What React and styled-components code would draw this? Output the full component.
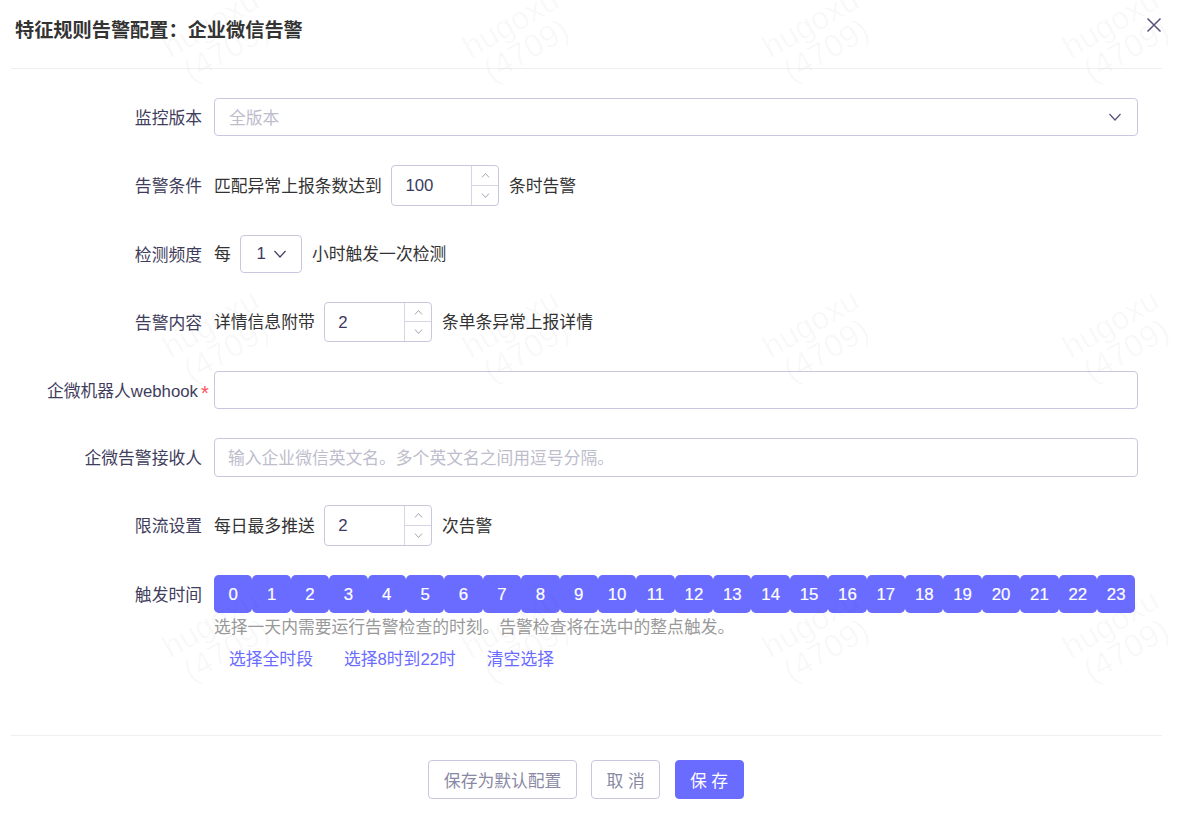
import React from 'react';
import styled, { createGlobalStyle } from 'styled-components';

const Global = createGlobalStyle`
  html, body { margin: 0; padding: 0; background: #fff; height: 100%; overflow: hidden; }
  * { box-sizing: border-box; }
  body { font-family: "Liberation Sans", "Noto Sans CJK SC", sans-serif; font-size: 16.8px; color: #333; }
`;

const Modal = styled.div`
  position: relative;
  width: 1182px;
  height: 821px;
  padding: 0 20px 0 11px;
  overflow: hidden;
`;
const Header = styled.header`
  height: 69px;
  border-bottom: 1px solid #eeeef3;
`;
const Title = styled.h2`
  margin: 0;
  padding: 18px 0 0 4px;
  font-size: 19.2px;
  line-height: 26px;
  font-weight: 700;
  color: #333;
`;
const Close = styled.button`
  position: absolute;
  top: 17px;
  left: 1146px;
  width: 16px;
  height: 16px;
  padding: 0;
  border: 0;
  background: none;
  color: #55537a;
  display: flex;
`;
const Form = styled.form`
  height: 667px;
  padding: 29px 24px 0 0;
  display: flex;
  flex-direction: column;
  gap: 28.8px;
`;
const Row = styled.div`
  display: flex;
  align-items: ${p => (p.$top ? 'flex-start' : 'center')};
  gap: 12px;
`;
const Label = styled.label`
  width: 191px;
  flex: none;
  margin: 2px 0 -2px;
  text-align: right;
  color: #3f3d5c;
  line-height: 38.4px;
  white-space: nowrap;
`;
const Star = styled.span`
  color: #ff4d5b;
  font-size: 20px;
  line-height: 0;
  vertical-align: -3px;
  margin: 0 -6.8px 0 3px;
`;
const Control = styled.div`
  flex: 1;
  min-width: 0;
  display: flex;
  align-items: center;
  gap: 9.6px;
`;
const Field = styled.div`
  flex: 1;
  height: 38.4px;
  border: 1px solid #c7c8dd;
  border-radius: 4px;
  padding: 0 15px 0 ${p => p.$inset}px;
  display: flex;
  align-items: center;
  justify-content: space-between;
  color: #bdbdcc;
`;
const FieldText = styled.span`
  margin: 2px 0 -2px;
  line-height: 34px;
`;
const FieldArrow = styled.span`
  color: #55537a;
  display: flex;
`;
const SmallSelect = styled.div`
  width: 62px;
  height: 38.4px;
  border: 1px solid #c7c8dd;
  border-radius: 4px;
  padding: 0 14px 0 15px;
  display: flex;
  align-items: center;
  justify-content: space-between;
  color: #3b3a5e;
`;
const NumberBox = styled.div`
  width: 108px;
  height: 40.5px;
  border: 1px solid #c7c8dd;
  border-radius: 4px;
  display: flex;
  color: #3b3a5e;
`;
const NumberValue = styled.div`
  flex: 1;
  padding-left: 13px;
  line-height: 39.5px;
`;
const Steppers = styled.div`
  width: 27px;
  border-left: 1px solid #d5d6e5;
  display: flex;
  flex-direction: column;
`;
const Step = styled.div`
  flex: 1;
  display: flex;
  align-items: center;
  justify-content: center;
  color: #8a89a3;
  & + & { border-top: 1px solid #d5d6e5; }
`;
const Text = styled.span`
  color: #333;
  white-space: nowrap;
  margin-bottom: 1px;
`;
const Hours = styled.div`
  display: flex;
`;
const Hour = styled.div`
  width: 38.4px;
  height: 38.4px;
  padding-top: 2px;
  background: #6a6bff;
  color: #fff;
  border-radius: 4.8px;
  -webkit-text-stroke: 0.2px #fff;
  display: flex;
  align-items: center;
  justify-content: center;
`;
const Hint = styled.div`
  color: #999;
  line-height: 30px;
`;
const Links = styled.div`
  display: flex;
  gap: 31px;
  padding: 4px 0 0 15px;
`;
const TextLink = styled.a`
  color: #6a6bff;
  line-height: 26px;
`;
const Footer = styled.footer`
  height: 85px;
  margin-top: -1px;
  border-top: 1px solid #eeeef3;
  padding: 24px 1px 0 0;
  display: flex;
  justify-content: center;
  gap: 14.4px;
`;
const Button = styled.button`
  height: 39px;
  padding: 0 14.4px;
  font: inherit;
  border-radius: 4px;
  white-space: pre;
  border: 1px solid ${p => (p.$primary ? '#6a6bff' : '#c7c8dd')};
  background: ${p => (p.$primary ? '#6a6bff' : 'transparent')};
  color: ${p => (p.$primary ? '#fff' : '#8a89a3')};
`;
const Watermarks = styled.div`
  position: absolute;
  top: -113px;
  left: 68px;
  display: grid;
  grid-template-columns: repeat(4, 300px);
  grid-auto-rows: 300px;
  place-items: center;
  pointer-events: none;
`;
const Mark = styled.div`
  text-align: center;
  transform: rotate(-30deg);
  font-size: 32px;
  line-height: 31px;
  color: rgba(60, 60, 80, 0.035);
`;

const Chevron = ({ size = 14, up }) => (
  <svg width={size} height={size} viewBox="0 0 14 14" fill="none" stroke="currentColor" strokeWidth="1.2">
    <path d={up ? 'M1.5 10 L7 4 L12.5 10' : 'M1.5 4 L7 10 L12.5 4'} />
  </svg>
);

const NumberInput = ({ value }) => (
  <NumberBox>
    <NumberValue>{value}</NumberValue>
    <Steppers>
      <Step><Chevron size={9} up /></Step>
      <Step><Chevron size={9} /></Step>
    </Steppers>
  </NumberBox>
);

export default function App() {
  return (
    <Modal>
      <Global />
      <Header>
        <Title>特征规则告警配置：企业微信告警</Title>
        <Close aria-label="close">
          <svg width="16" height="16" viewBox="0 0 16 16" fill="none" stroke="currentColor" strokeWidth="1.5">
            <path d="M1.5 1.5 L14.5 14.5 M14.5 1.5 L1.5 14.5" />
          </svg>
        </Close>
      </Header>
      <Form>
        <Row>
          <Label>监控版本</Label>
          <Control>
            <Field $inset={14}><FieldText>全版本</FieldText><FieldArrow><Chevron /></FieldArrow></Field>
          </Control>
        </Row>
        <Row>
          <Label>告警条件</Label>
          <Control>
            <Text>匹配异常上报条数达到</Text>
            <NumberInput value="100" />
            <Text>条时告警</Text>
          </Control>
        </Row>
        <Row>
          <Label>检测频度</Label>
          <Control>
            <Text>每</Text>
            <SmallSelect>1<Chevron /></SmallSelect>
            <Text>小时触发一次检测</Text>
          </Control>
        </Row>
        <Row>
          <Label>告警内容</Label>
          <Control>
            <Text>详情信息附带</Text>
            <NumberInput value="2" />
            <Text>条单条异常上报详情</Text>
          </Control>
        </Row>
        <Row>
          <Label>企微机器人webhook<Star>*</Star></Label>
          <Control><Field $inset={13} /></Control>
        </Row>
        <Row>
          <Label>企微告警接收人</Label>
          <Control><Field $inset={13}><FieldText>输入企业微信英文名。多个英文名之间用逗号分隔。</FieldText></Field></Control>
        </Row>
        <Row>
          <Label>限流设置</Label>
          <Control>
            <Text>每日最多推送</Text>
            <NumberInput value="2" />
            <Text>次告警</Text>
          </Control>
        </Row>
        <Row $top>
          <Label>触发时间</Label>
          <div>
            <Hours>
              {Array.from({ length: 24 }, (_, i) => <Hour key={i}>{i}</Hour>)}
            </Hours>
            <Hint>选择一天内需要运行告警检查的时刻。告警检查将在选中的整点触发。</Hint>
            <Links>
              <TextLink>选择全时段</TextLink>
              <TextLink>选择8时到22时</TextLink>
              <TextLink>清空选择</TextLink>
            </Links>
          </div>
        </Row>
      </Form>
      <Footer>
        <Button>保存为默认配置</Button>
        <Button>取 消</Button>
        <Button $primary>保 存</Button>
      </Footer>
      <Watermarks>
        {Array.from({ length: 12 }, (_, i) => <Mark key={i}>hugoxu<br />(4709)</Mark>)}
      </Watermarks>
    </Modal>
  );
}
